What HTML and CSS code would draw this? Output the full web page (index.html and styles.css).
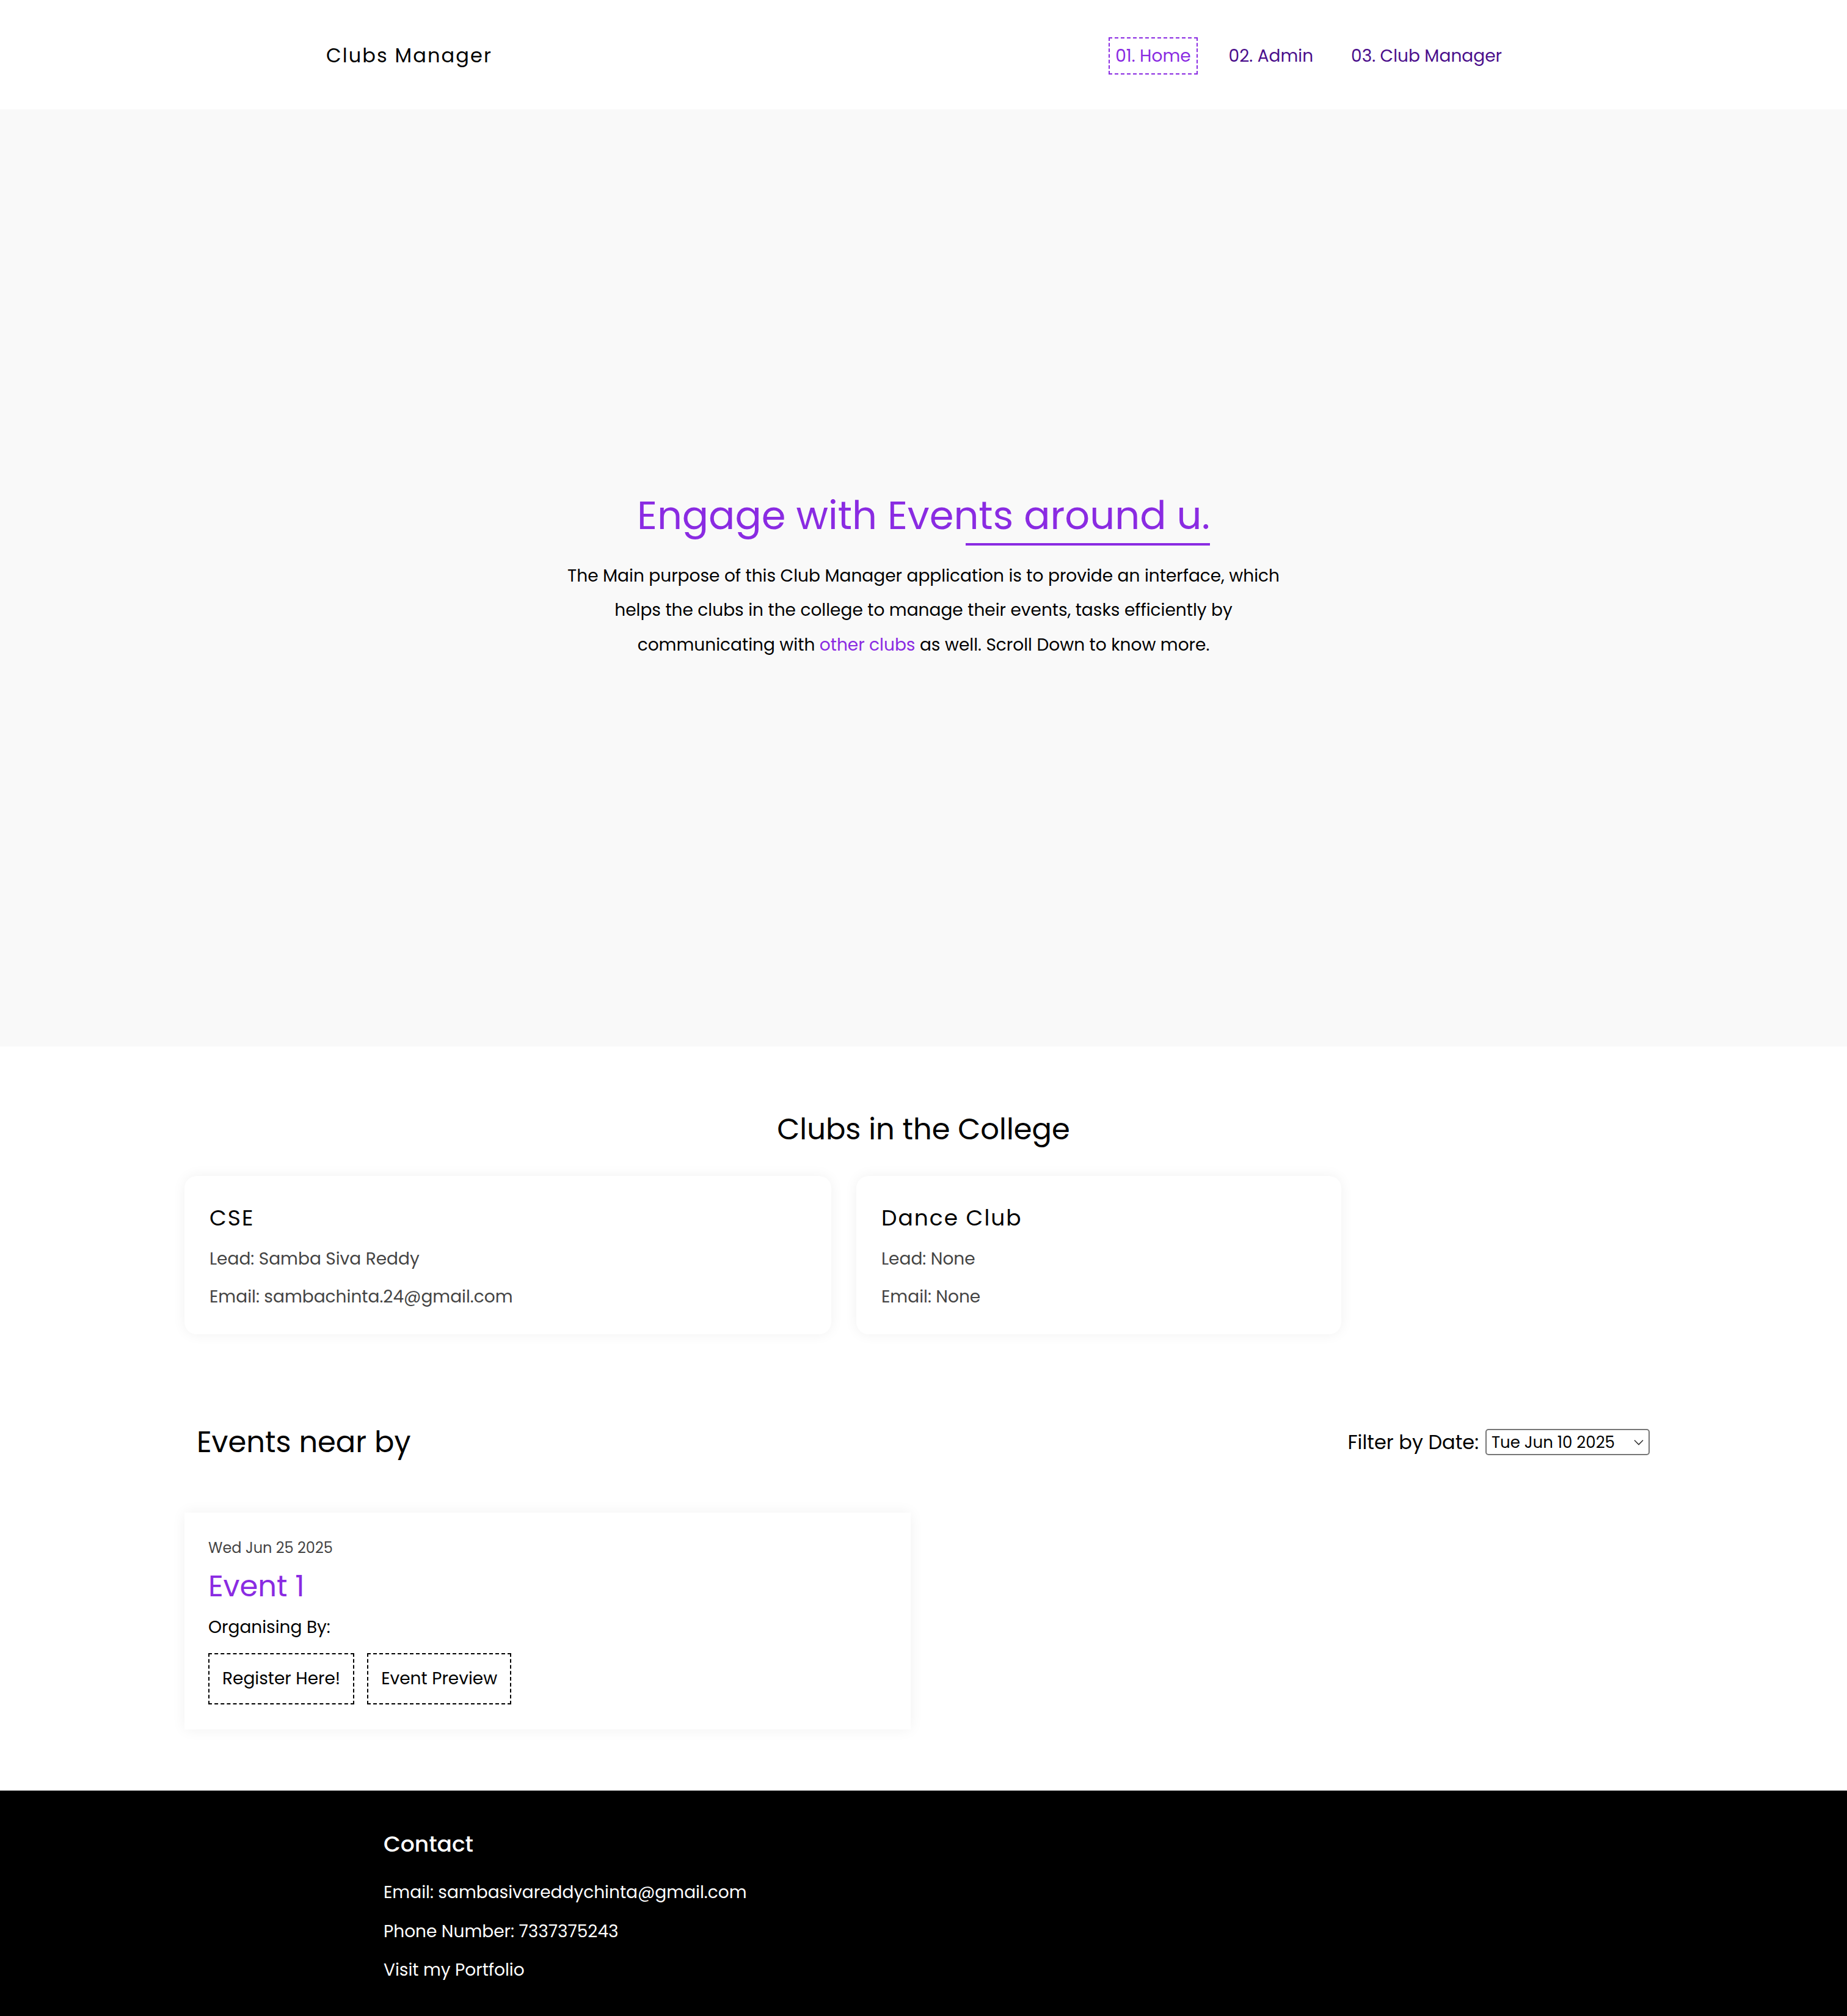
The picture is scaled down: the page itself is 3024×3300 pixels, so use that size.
FILE: index.html
```html
<!DOCTYPE html>
<html lang="en">
<head>
<meta charset="utf-8">
<title>Clubs Manager</title>
<link rel="stylesheet" href="styles.css">
</head>
<body>
<header class="topbar">
  <div class="brand">Clubs Manager</div>
  <nav class="nav">
    <a class="nav-link active" href="#">01. Home</a>
    <a class="nav-link" href="#">02. Admin</a>
    <a class="nav-link" href="#">03. Club Manager</a>
  </nav>
</header>

<section class="hero">
  <h1 class="hero-title">Engage with Events around u.</h1>
  <p class="hero-text">The Main purpose of this Club Manager application is to provide an interface, which helps the clubs in the college to manage their events, tasks efficiently by communicating with <span class="accent">other clubs</span> as well. Scroll Down to know more.</p>
</section>

<main class="content">
  <section class="clubs">
    <h2 class="clubs-title">Clubs in the College</h2>
    <div class="club-grid">
      <div class="club-card">
        <h3 class="club-name">CSE</h3>
        <p class="club-line">Lead: Samba Siva Reddy</p>
        <p class="club-line">Email: sambachinta.24@gmail.com</p>
      </div>
      <div class="club-card">
        <h3 class="club-name">Dance Club</h3>
        <p class="club-line">Lead: None</p>
        <p class="club-line">Email: None</p>
      </div>
    </div>
  </section>

  <section class="events">
    <div class="events-head">
      <h2 class="events-title">Events near by</h2>
      <label class="filter">
        <span class="filter-label">Filter by Date:</span>
        <span class="select-wrap">
          <select class="date-select">
            <option>Tue Jun 10 2025</option>
          </select>
          <svg class="chev" viewBox="0 0 16 10" width="16" height="10"><path d="M1 1.5 L8 8.5 L15 1.5" fill="none" stroke="#333" stroke-width="1.6"/></svg>
        </span>
      </label>
    </div>
    <div class="event-grid">
      <div class="event-card">
        <div class="event-date">Wed Jun 25 2025</div>
        <div class="event-name">Event 1</div>
        <div class="event-org">Organising By:</div>
        <div class="event-actions">
          <button class="dash-btn">Register Here!</button>
          <button class="dash-btn">Event Preview</button>
        </div>
      </div>
    </div>
  </section>
</main>

<footer class="footer">
  <div class="footer-inner">
    <h3 class="footer-title">Contact</h3>
    <p class="footer-line">Email: sambasivareddychinta@gmail.com</p>
    <p class="footer-line">Phone Number: 7337375243</p>
    <p class="footer-line"><a class="footer-link" href="#">Visit my Portfolio</a></p>
  </div>
</footer>
</body>
</html>
```

FILE: styles.css
```css
* { box-sizing: border-box; }

body {
  margin: 0;
  font-family: "Poppins", "DejaVu Sans", sans-serif;
  color: #000;
  background: #fff;
}

/* Header */
.topbar {
  height: 179px;
  display: flex;
  align-items: center;
  justify-content: space-between;
  padding: 0 554px 0 534px;
  background: #fff;
}
.brand {
  font-size: 32px;
  letter-spacing: 2.1px;
  color: #000;
  padding-top: 2px;
}
.nav {
  display: flex;
  align-items: center;
  gap: 40px;
  padding-top: 3px;
}
.nav-link {
  font-size: 28px;
  line-height: 37px;
  padding: 10px 9px;
  border: 2px dashed transparent;
  color: #4b0f8c;
  text-decoration: none;
}
.nav-link.active {
  color: #8a2be2;
  border-color: #8a2be2;
}

/* Hero */
.hero {
  height: 1534px;
  background: #f9f9f9;
  display: flex;
  flex-direction: column;
  align-items: center;
  justify-content: center;
  padding-bottom: 2px;
}
.hero-title {
  margin: 0;
  font-size: 64px;
  font-weight: 400;
  line-height: 76px;
  color: #8a2be2;
}
.hero-title::after {
  content: "";
  display: block;
  width: 400px;
  height: 4px;
  margin: 7px 0 0 auto;
  background: #8a2be2;
}
.hero-text {
  margin: 22px 0 0;
  max-width: 1190px;
  font-size: 28px;
  line-height: 56.5px;
  text-align: center;
}
.accent { color: #8a2be2; }

/* Content wrapper */
.content {
  width: 2420px;
  margin: 0 auto;
}

/* Clubs */
.clubs {
  padding-top: 106px;
}
.clubs-title {
  margin: 0 0 46px;
  font-size: 48px;
  font-weight: 400;
  line-height: 60px;
  text-align: center;
}
.club-grid {
  display: grid;
  grid-template-columns: 1059px 794px;
  gap: 41px;
}
.club-card {
  background: #fff;
  border-radius: 20px;
  box-shadow: 0 0 22px rgba(0, 0, 0, 0.06);
  padding: 48px 41px 30px;
}
.club-name {
  margin: 0 0 15px;
  font-size: 36px;
  font-weight: 400;
  line-height: 42px;
  letter-spacing: 2px;
}
.club-line {
  margin: 0;
  font-size: 28px;
  line-height: 62px;
  color: #444;
}

/* Events */
.events {
  padding-top: 149px;
  padding-bottom: 100px;
}
.events-head {
  display: flex;
  align-items: center;
  justify-content: space-between;
  padding: 0 21px 0 20px;
  margin-bottom: 88px;
}
.events-title {
  margin: 0;
  font-size: 48px;
  font-weight: 400;
  line-height: 55px;
}
.filter {
  display: flex;
  align-items: center;
  gap: 11px;
}
.filter-label {
  font-size: 32px;
}
.select-wrap {
  position: relative;
  display: inline-block;
}
.date-select {
  appearance: none;
  -webkit-appearance: none;
  width: 269px;
  height: 43px;
  padding: 0 30px 0 8px;
  font-family: inherit;
  font-size: 26px;
  color: #000;
  background: #fff;
  border: 2px solid #767676;
  border-radius: 5px;
}
.chev {
  position: absolute;
  right: 10px;
  top: 17px;
  pointer-events: none;
}
.event-grid {
  display: grid;
  grid-template-columns: 1189px;
}
.event-card {
  background: #fff;
  box-shadow: 0 0 22px rgba(0, 0, 0, 0.06);
  padding: 43px 40px 41px 39px;
}
.event-date {
  font-size: 24px;
  line-height: 30px;
  color: #444;
}
.event-name {
  margin-top: 20px;
  font-size: 48px;
  line-height: 56px;
  color: #8a2be2;
}
.event-org {
  margin-top: 19px;
  font-size: 28px;
  line-height: 40px;
}
.event-actions {
  margin-top: 22px;
  display: flex;
  gap: 21px;
}
.dash-btn {
  font-family: inherit;
  font-size: 28px;
  line-height: 40px;
  padding: 20px 21px;
  background: #fff;
  color: #000;
  border: 2px dashed #000;
}

/* Footer */
.footer {
  background: #000;
  color: #fff;
  height: 369px;
}
.footer-inner {
  padding: 67px 0 0 628px;
}
.footer-title {
  margin: 0 0 26px;
  font-size: 36px;
  font-weight: 500;
  line-height: 42px;
}
.footer-line {
  margin: 0;
  font-size: 28px;
  line-height: 63.5px;
}
.footer-link {
  color: #fff;
  text-decoration: none;
}
```
